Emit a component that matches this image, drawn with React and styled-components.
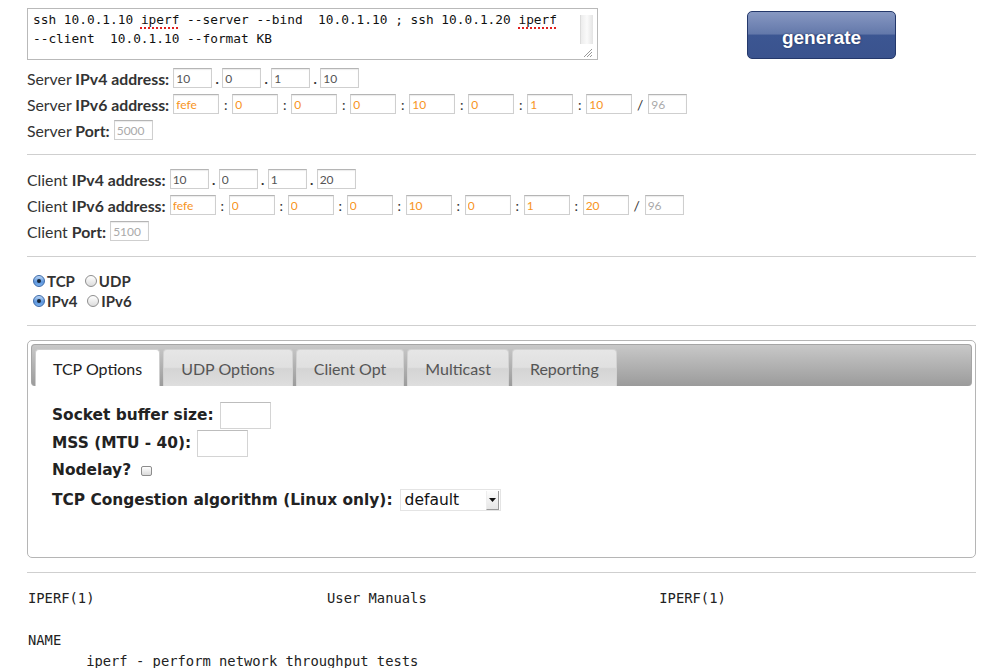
import React from 'react';
import styled, { createGlobalStyle } from 'styled-components';

const GlobalStyle = createGlobalStyle`
  html, body {
    margin: 0;
    padding: 0;
    background: #fff;
  }
  body {
    font-family: Lato, "Open Sans", sans-serif;
    color: #333;
  }
`;

const Page = styled.div`
  width: 949px;
  padding: 8px 0 0 27px;
`;

const TopBar = styled.div`
  display: flex;
  align-items: flex-start;
`;

const CommandBox = styled.div`
  box-sizing: border-box;
  width: 571px;
  height: 52px;
  border: 1px solid #b9b9b9;
  display: flex;
  background: #fff;
`;

const CommandText = styled.div`
  flex: 1;
  padding: 1px 0 0 5px;
  font-family: "DejaVu Sans Mono", monospace;
  font-size: 12.8px;
  line-height: 19px;
  color: #111;
  white-space: pre-wrap;
`;

const Misspelled = styled.span`
  text-decoration: underline dotted #e02020;
  text-decoration-thickness: 2px;
  text-underline-offset: 3px;
`;

const ScrollColumn = styled.div`
  width: 13px;
  margin: 6px 4px 1px 0;
  display: flex;
  flex-direction: column;
`;

const ScrollTrack = styled.div`
  flex: 1;
  background: linear-gradient(90deg, #ececec, #fafafa 50%, #e4e4e4);
  border-left: 1px solid #dcdcdc;
`;

const ResizeGrip = styled.div`
  height: 14px;
  display: flex;
  align-items: flex-end;
  justify-content: flex-end;
`;

const GenerateButton = styled.button`
  box-sizing: border-box;
  margin: 3px 0 0 149px;
  width: 149px;
  height: 48px;
  padding: 6px 0 0;
  border: 1px solid #24386b;
  border-radius: 5px;
  background: linear-gradient(
    #8798c2 0%,
    #6378aa 48%,
    #3c5692 50%,
    #3a538e 100%
  );
  color: #fff;
  font-family: "Liberation Sans", Arial, sans-serif;
  font-weight: bold;
  font-size: 19px;
  text-shadow: 0 0 2px rgba(20, 30, 60, 0.7);
  cursor: pointer;
`;

const Section = styled.div`
  margin-top: ${(p) => p.$top || 12}px;
`;

const FieldRow = styled.div`
  display: flex;
  align-items: center;
  height: 26px;
`;

const FieldLabel = styled.span`
  font-size: 15.8px;
  color: #333;
  margin-right: 4px;
  white-space: nowrap;

  b {
    font-weight: bold;
  }
`;

const AddrInput = styled.input`
  box-sizing: border-box;
  width: ${(p) => p.$w || 39}px;
  height: 20px;
  padding: 1px 2px 0;
  border: 1px solid #cfcfcf;
  border-top-color: #b5b5b5;
  box-shadow: inset 0 1px 1px rgba(0, 0, 0, 0.08);
  font-family: Lato, sans-serif;
  font-size: 12px;
  color: ${(p) =>
    p.$tone === 'orange' ? '#f7941d' : p.$tone === 'muted' ? '#aaa' : '#555'};
  outline: none;
`;

const Sep = styled.span`
  width: ${(p) => p.$w}px;
  text-align: center;
  font-size: 14px;
  font-weight: ${(p) => (p.$bold ? 'bold' : 'normal')};
  color: #333;
`;

const Rule = styled.hr`
  margin: ${(p) => p.$top || 12}px 0 0;
  border: none;
  border-top: 1px solid #cfcfcf;
  height: 0;
`;

const RadioRow = styled.div`
  display: flex;
  align-items: center;
  height: 20px;
  padding-left: 6px;
`;

const RadioItem = styled.label`
  display: flex;
  align-items: center;
  margin-right: ${(p) => p.$gap || 10}px;
  font-size: 15px;
  font-weight: bold;
  color: #333;
`;

const RadioDot = styled.span`
  box-sizing: border-box;
  width: 12px;
  height: 12px;
  border-radius: 50%;
  margin-right: 2px;
  display: flex;
  align-items: center;
  justify-content: center;
  border: 1px solid ${(p) => (p.$on ? '#3d6aa8' : '#8e8e8e')};
  background: ${(p) =>
    p.$on
      ? 'linear-gradient(#bcd6f5, #5b95dc 60%, #7fb3ee)'
      : 'linear-gradient(#ffffff, #dcdcdc)'};

  &::after {
    content: '';
    width: 4px;
    height: 4px;
    border-radius: 50%;
    background: #16263a;
    display: ${(p) => (p.$on ? 'block' : 'none')};
  }
`;

const Panel = styled.div`
  box-sizing: border-box;
  margin-top: 14px;
  height: 218px;
  border: 1px solid #b5b5b5;
  border-radius: 5px;
  padding: 3px;
`;

const TabBar = styled.div`
  box-sizing: border-box;
  height: 42px;
  display: flex;
  align-items: flex-end;
  gap: 3px;
  padding: 0 3px;
  border: 1px solid #a5a5a5;
  border-bottom: none;
  border-radius: 4px;
  background: linear-gradient(#c8c8c8, #9b9b9b);
`;

const Tab = styled.div`
  box-sizing: border-box;
  height: 37px;
  padding: 0 17px;
  display: flex;
  align-items: center;
  font-size: 16px;
  border: 1px solid ${(p) => (p.$active ? '#cfcfcf' : '#d2d2d2')};
  border-bottom: none;
  border-radius: 4px 4px 0 0;
  color: ${(p) => (p.$active ? '#222' : '#555')};
  background: ${(p) =>
    p.$active
      ? '#fff'
      : 'linear-gradient(#e6e6e6 0%, #e0e0e0 48%, #d4d4d4 52%, #dedede 100%)'};
`;

const TabBody = styled.div`
  padding: 15px 21px 0;
  font-family: "DejaVu Sans", Verdana, sans-serif;
  font-weight: bold;
  font-size: 15.4px;
  color: #222;
`;

const OptionRow = styled.div`
  display: flex;
  align-items: center;
  min-height: ${(p) => p.$h || 28}px;
  margin-top: ${(p) => p.$top || 0}px;
`;

const BoxInput = styled.input`
  box-sizing: border-box;
  width: 51px;
  height: 27px;
  margin-left: 6px;
  border: 1px solid #d4d4d4;
  border-top-color: #bdbdbd;
  outline: none;
`;

const CheckBox = styled.span`
  box-sizing: border-box;
  width: 11px;
  height: 10px;
  margin-left: 10px;
  margin-top: 3px;
  border: 1px solid #8c8c8c;
  border-radius: 2px;
  background: linear-gradient(#fff, #dadada);
`;

const SelectBox = styled.div`
  box-sizing: border-box;
  width: 101px;
  height: 22px;
  margin-left: 7px;
  display: flex;
  align-items: center;
  justify-content: space-between;
  padding: 0 1px 0 4px;
  border: 1px solid #e4e4e4;
  background: #fff;
  font-weight: normal;
  font-size: 15.5px;
  color: #111;
`;

const SelectArrow = styled.span`
  box-sizing: border-box;
  width: 13px;
  height: 19px;
  display: flex;
  align-items: center;
  justify-content: center;
  border-right: 1px solid #9a9a9a;
  border-bottom: 1px solid #9a9a9a;
  border-left: 1px solid #eee;
  background: linear-gradient(#fdfdfd, #e6e6e6);
`;

const ManPage = styled.pre`
  margin: 15px 0 0 1px;
  font-family: "DejaVu Sans Mono", monospace;
  font-size: 13.8px;
  line-height: 21px;
  color: #222;
`;

function AddressRow({ host, ipv4 }) {
  return (
    <FieldRow>
      <FieldLabel>
        {host} <b>IPv4 address:</b>
      </FieldLabel>
      {ipv4.map((part, i) => (
        <React.Fragment key={i}>
          {i > 0 && (
            <Sep $w={10} $bold>
              .
            </Sep>
          )}
          <AddrInput defaultValue={part} />
        </React.Fragment>
      ))}
    </FieldRow>
  );
}

function Ipv6Row({ host, ipv6, prefix }) {
  return (
    <FieldRow>
      <FieldLabel>
        {host} <b>IPv6 address:</b>
      </FieldLabel>
      {ipv6.map((part, i) => (
        <React.Fragment key={i}>
          {i > 0 && <Sep $w={13}>:</Sep>}
          <AddrInput $w={46} $tone="orange" defaultValue={part} />
        </React.Fragment>
      ))}
      <Sep $w={16}>/</Sep>
      <AddrInput $tone="muted" defaultValue={prefix} />
    </FieldRow>
  );
}

function HostSection({ host, ipv4, ipv6, port, top }) {
  return (
    <Section $top={top}>
      <AddressRow host={host} ipv4={ipv4} />
      <Ipv6Row host={host} ipv6={ipv6} prefix="96" />
      <FieldRow>
        <FieldLabel>
          {host} <b>Port:</b>
        </FieldLabel>
        <AddrInput $tone="muted" defaultValue={port} />
      </FieldRow>
    </Section>
  );
}

const tabs = ['TCP Options', 'UDP Options', 'Client Opt', 'Multicast', 'Reporting'];

const manText = `IPERF(1)                            User Manuals                            IPERF(1)

NAME
       iperf - perform network throughput tests`;

export default function App() {
  return (
    <>
      <GlobalStyle />
      <Page>
        <TopBar>
          <CommandBox>
            <CommandText>
              ssh 10.0.1.10 <Misspelled>iperf</Misspelled> --server --bind  10.0.1.10 ; ssh 10.0.1.20{' '}
              <Misspelled>iperf</Misspelled>
              {'\n'}--client  10.0.1.10 --format KB
            </CommandText>
            <ScrollColumn>
              <ScrollTrack />
              <ResizeGrip>
                <svg width="11" height="11" viewBox="0 0 11 11">
                  <path d="M10 2 L2 10 M10 5 L5 10 M10 8 L8 10" stroke="#999" strokeWidth="1" />
                </svg>
              </ResizeGrip>
            </ScrollColumn>
          </CommandBox>
          <GenerateButton>generate</GenerateButton>
        </TopBar>

        <HostSection
          top={5}
          host="Server"
          ipv4={['10', '0', '1', '10']}
          ipv6={['fefe', '0', '0', '0', '10', '0', '1', '10']}
          port="5000"
        />
        <Rule $top={11} />
        <HostSection
          top={11}
          host="Client"
          ipv4={['10', '0', '1', '20']}
          ipv6={['fefe', '0', '0', '0', '10', '0', '1', '20']}
          port="5100"
        />
        <Rule $top={12} />

        <Section $top={14}>
          <RadioRow>
            <RadioItem>
              <RadioDot $on />
              TCP
            </RadioItem>
            <RadioItem>
              <RadioDot />
              UDP
            </RadioItem>
          </RadioRow>
          <RadioRow>
            <RadioItem>
              <RadioDot $on />
              IPv4
            </RadioItem>
            <RadioItem>
              <RadioDot />
              IPv6
            </RadioItem>
          </RadioRow>
        </Section>
        <Rule $top={14} />

        <Panel>
          <TabBar>
            {tabs.map((t, i) => (
              <Tab key={t} $active={i === 0}>
                {t}
              </Tab>
            ))}
          </TabBar>
          <TabBody>
            <OptionRow>
              Socket buffer size:
              <BoxInput />
            </OptionRow>
            <OptionRow>
              MSS (MTU - 40):
              <BoxInput />
            </OptionRow>
            <OptionRow $h={25}>
              Nodelay?
              <CheckBox />
            </OptionRow>
            <OptionRow $top={5} $h={26}>
              TCP Congestion algorithm (Linux only):
              <SelectBox>
                default
                <SelectArrow>
                  <svg width="7" height="4" viewBox="0 0 7 4">
                    <path d="M0 0 H7 L3.5 4 Z" fill="#111" />
                  </svg>
                </SelectArrow>
              </SelectBox>
            </OptionRow>
          </TabBody>
        </Panel>

        <Rule $top={14} />
        <ManPage>{manText}</ManPage>
      </Page>
    </>
  );
}
